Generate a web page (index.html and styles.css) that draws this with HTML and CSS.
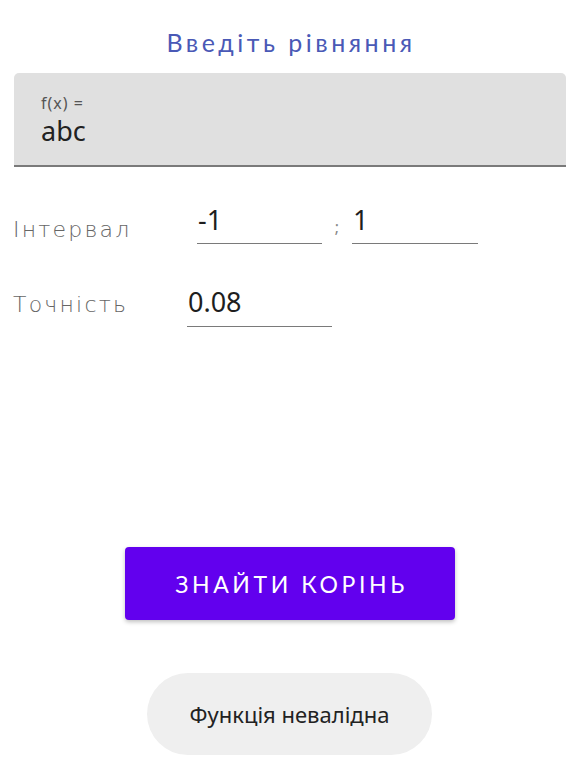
FILE: index.html
```html
<!DOCTYPE html>
<html lang="uk">
<head>
<meta charset="utf-8">
<link rel="stylesheet" href="styles.css">
</head>
<body>
<main class="screen">
  <h1 class="title">Введіть рівняння</h1>
  <div class="fx-box">
    <div class="fx-label">f(x) =</div>
    <div class="fx-value">abc</div>
  </div>
  <div class="row row-interval">
    <span class="label">Інтервал</span>
    <div class="field field-a">-1</div>
    <span class="sep">;</span>
    <div class="field field-b">1</div>
  </div>
  <div class="row row-eps">
    <span class="label">Точність</span>
    <div class="field field-eps">0.08</div>
  </div>
  <button class="btn">ЗНАЙТИ КОРІНЬ</button>
  <div class="toast">Функція невалідна</div>
</main>
</body>
</html>
```
FILE: styles.css
```css
html, body {
  margin: 0;
  padding: 0;
  background: #ffffff;
}
.screen {
  width: 584px;
  height: 779px;
  padding-top: 27px;
  box-sizing: border-box;
  display: flex;
  flex-direction: column;
  font-family: "Noto Sans", sans-serif;
}
.title {
  margin: 0;
  height: 30px;
  line-height: 30px;
  text-align: center;
  font-family: "Lato", sans-serif;
  font-weight: 400;
  font-size: 25px;
  letter-spacing: 3.5px;
  color: #4a59b6;
  padding-right: 2px;
}
.fx-box {
  margin: 16px 0 0 14px;
  width: 552px;
  height: 94px;
  box-sizing: border-box;
  background: #e0e0e0;
  border-radius: 5px 5px 0 0;
  border-bottom: 2px solid #7a7a7a;
  padding: 20px 0 0 27px;
}
.fx-label {
  font-size: 16px;
  line-height: 20px;
  letter-spacing: 1px;
  color: #555555;
}
.fx-value {
  margin-top: 2px;
  font-size: 27px;
  line-height: 32px;
  color: #222222;
}
.row {
  display: flex;
  align-items: flex-end;
  margin-left: 13px;
}
.row-interval {
  margin-top: 40px;
}
.row-eps {
  margin-top: 45px;
}
.label {
  font-family: "DejaVu Sans", sans-serif;
  font-weight: 200;
  font-size: 22px;
  letter-spacing: 2.2px;
  color: #666666;
  line-height: 26px;
}
.row-interval .label {
  width: 184px;
  margin-bottom: 1px;
}
.row-eps .label {
  width: 174px;
  margin-bottom: 9px;
}
.field {
  height: 37px;
  box-sizing: border-box;
  border-bottom: 1.5px solid #7a7a7a;
  font-size: 27px;
  line-height: 26px;
  color: #1e1e1e;
  padding-left: 1px;
}
.field-a {
  width: 125px;
}
.sep {
  width: 30px;
  text-align: center;
  font-size: 16px;
  color: #888888;
  margin-bottom: 6px;
}
.field-b {
  width: 126px;
}
.field-eps {
  width: 145px;
  height: 38px;
}
.btn {
  margin: 220px 0 0 125px;
  width: 330px;
  height: 73px;
  border: none;
  border-radius: 4px;
  background: #6200ee;
  color: #ffffff;
  font-family: "Lato", sans-serif;
  font-weight: 400;
  font-size: 23px;
  letter-spacing: 3.6px;
  box-shadow: 0 2px 4px rgba(0, 0, 0, 0.25);
  padding: 0 0 0 3px;
}
.toast {
  margin: 53px 0 0 147px;
  width: 285px;
  height: 82px;
  border-radius: 41px;
  background: #efefef;
  display: flex;
  align-items: center;
  justify-content: center;
  font-size: 22px;
  color: #222222;
}
```
